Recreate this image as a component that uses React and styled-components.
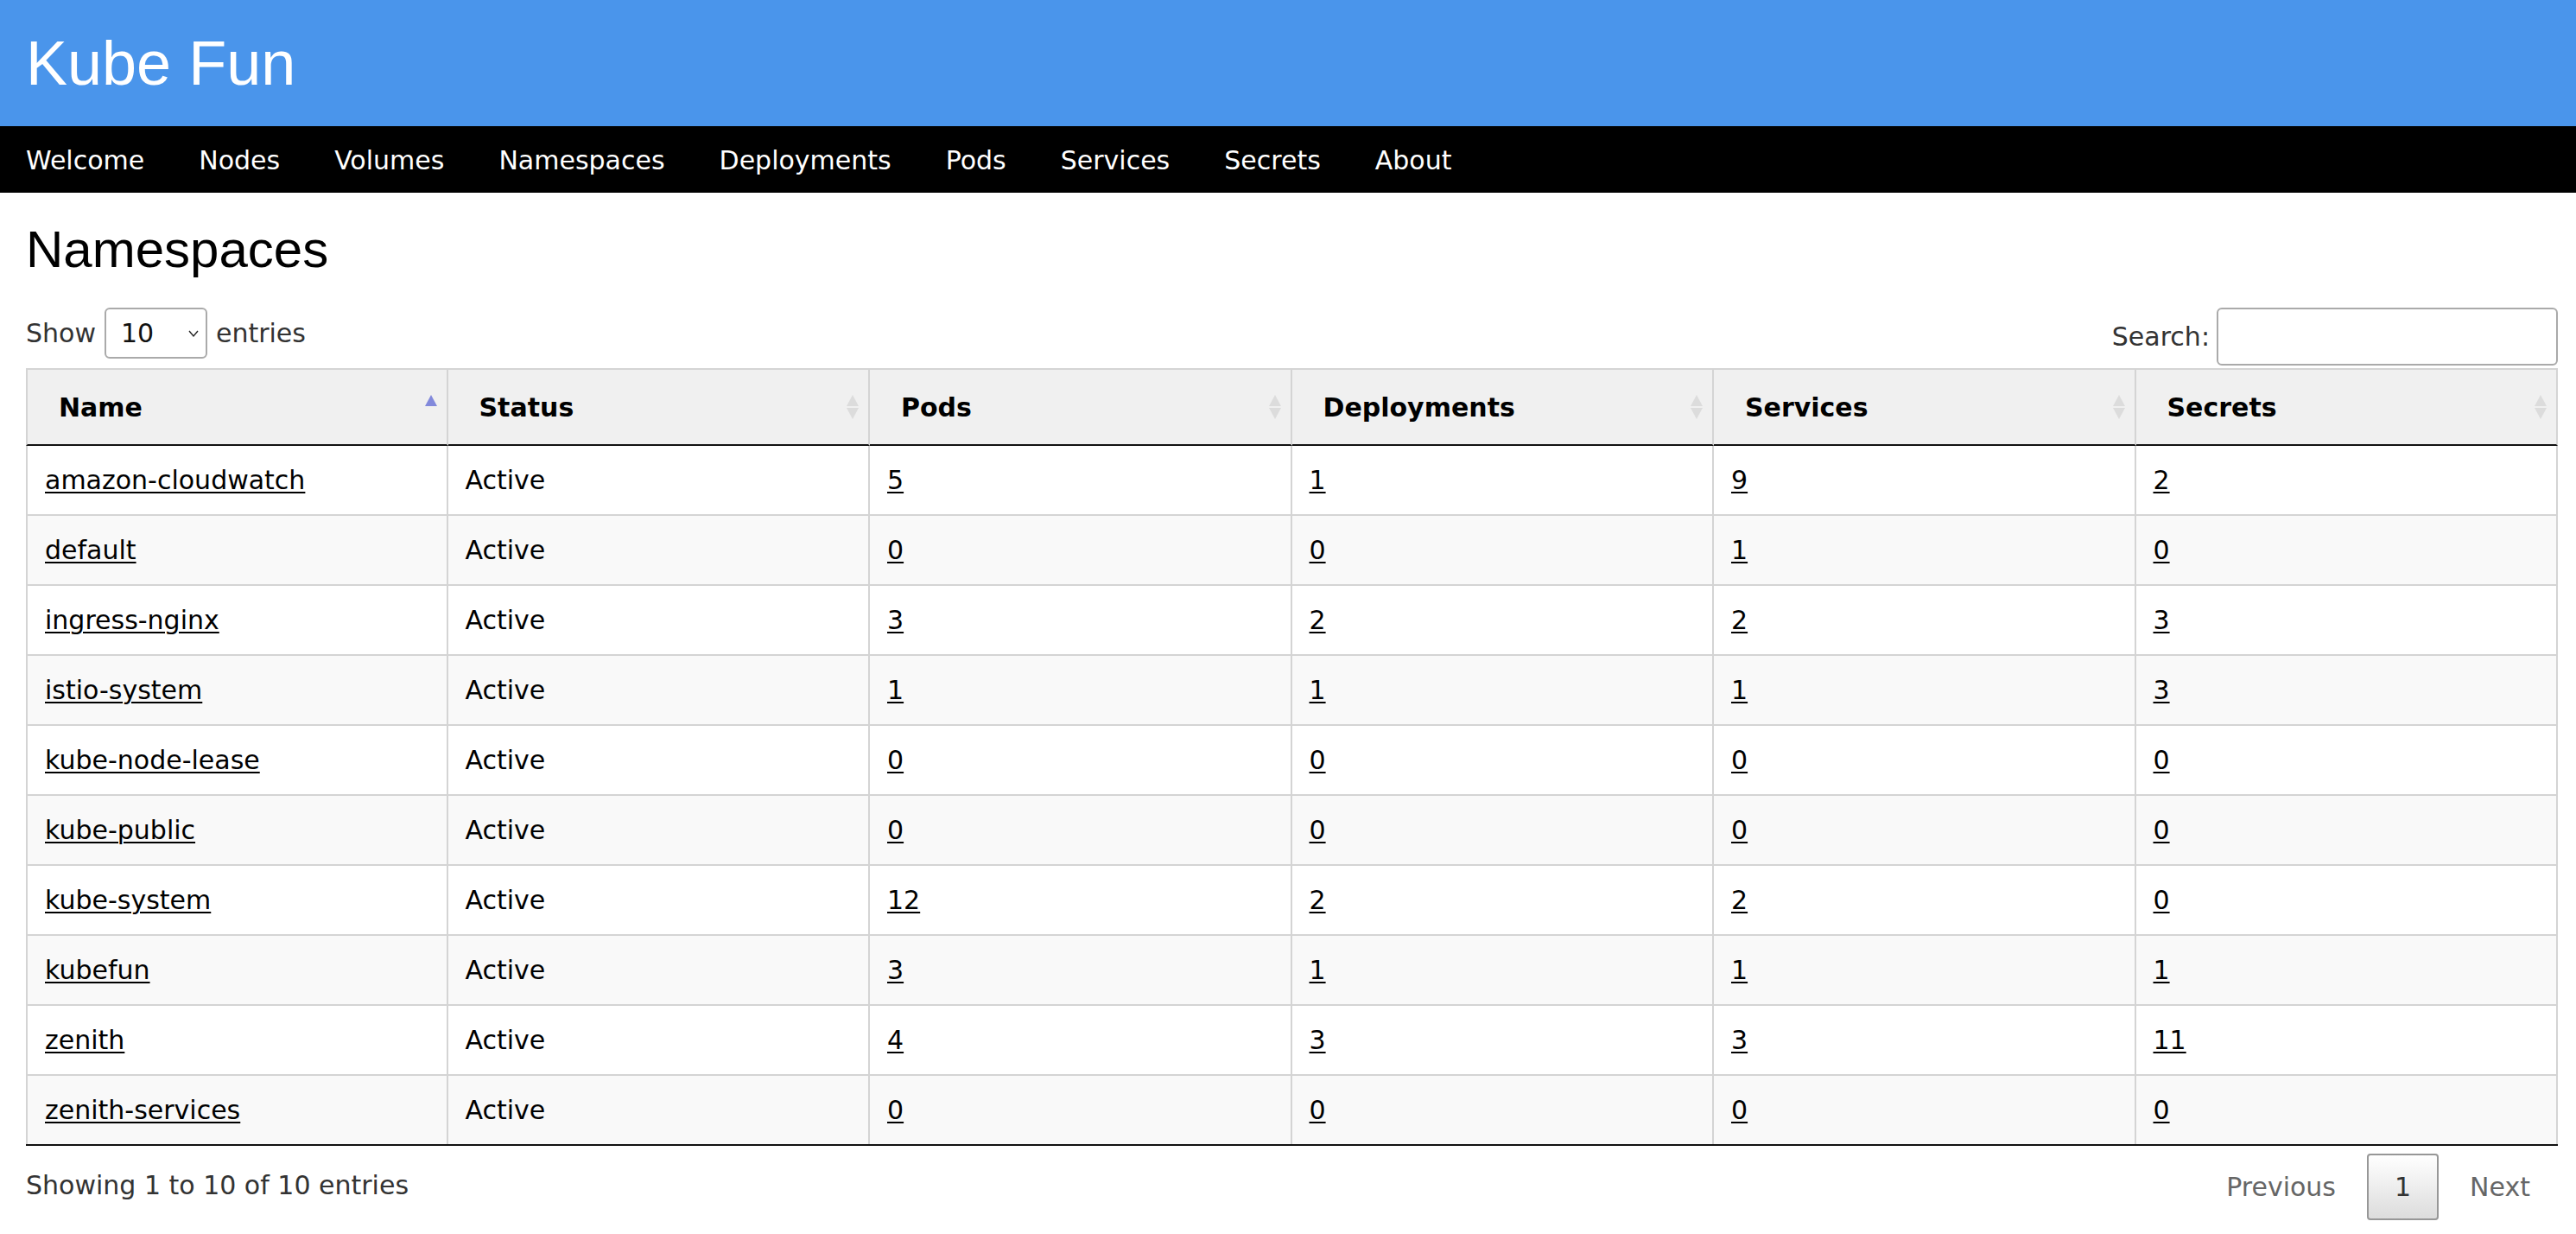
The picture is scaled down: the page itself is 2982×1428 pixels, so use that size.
import React from 'react';
import styled, { createGlobalStyle } from 'styled-components';

const GlobalStyle = createGlobalStyle`
  html, body {
    margin: 0;
    padding: 0;
    background: #fff;
  }
  body {
    font-family: "DejaVu Sans", Verdana, sans-serif;
    color: #333;
  }
`;

const namespaces = [
  { name: 'amazon-cloudwatch', pods: 5, deployments: 1, services: 9, secrets: 2 },
  { name: 'default', pods: 0, deployments: 0, services: 1, secrets: 0 },
  { name: 'ingress-nginx', pods: 3, deployments: 2, services: 2, secrets: 3 },
  { name: 'istio-system', pods: 1, deployments: 1, services: 1, secrets: 3 },
  { name: 'kube-node-lease', pods: 0, deployments: 0, services: 0, secrets: 0 },
  { name: 'kube-public', pods: 0, deployments: 0, services: 0, secrets: 0 },
  { name: 'kube-system', pods: 12, deployments: 2, services: 2, secrets: 0 },
  { name: 'kubefun', pods: 3, deployments: 1, services: 1, secrets: 1 },
  { name: 'zenith', pods: 4, deployments: 3, services: 3, secrets: 11 },
  { name: 'zenith-services', pods: 0, deployments: 0, services: 0, secrets: 0 },
];

const menu = ['Welcome', 'Nodes', 'Volumes', 'Namespaces', 'Deployments', 'Pods', 'Services', 'Secrets', 'About'];

const columns = [
  { label: 'Name', sort: 'asc' },
  { label: 'Status', sort: 'both' },
  { label: 'Pods', sort: 'both' },
  { label: 'Deployments', sort: 'both' },
  { label: 'Services', sort: 'both' },
  { label: 'Secrets', sort: 'both' },
];

const SCHeader = styled.header`
  height: 146px;
  background: #4a95eb;
  display: flex;
  align-items: center;
  padding: 0 30px;
`;
const SCTitle = styled.h1`
  margin: 0;
  font-family: "Liberation Sans", Arial, sans-serif;
  font-weight: normal;
  font-size: 72px;
  color: #fff;
`;
const SCNav = styled.nav`
  height: 77px;
  background: #000;
  display: flex;
  align-items: center;
  padding: 2px 0 0 30px;
  box-sizing: border-box;
  gap: 63px;
`;
const SCNavLink = styled.a`
  color: #fff;
  font-size: 30px;
  text-decoration: none;
  cursor: pointer;
`;
const SCMain = styled.main`
  padding: 0 21px 0 30px;
`;
const SCPageTitle = styled.h2`
  margin: 31px 0 0;
  font-family: "Liberation Sans", Arial, sans-serif;
  font-weight: normal;
  font-size: 60px;
  line-height: 70px;
  color: #000;
`;
const SCControls = styled.div`
  margin-top: 32px;
  margin-bottom: 3px;
  display: flex;
  justify-content: space-between;
  align-items: flex-start;
  font-size: 30px;
  color: #333;
`;
const SCLength = styled.label`
  display: flex;
  align-items: center;
  gap: 10px;
  height: 59px;
`;
const SCSelectWrap = styled.span`
  position: relative;
  display: inline-flex;
`;
const SCSelect = styled.select`
  appearance: none;
  width: 119px;
  height: 59px;
  border: 2px solid #aaa;
  border-radius: 6px;
  background: #fff;
  padding: 0 0 0 17px;
  font-family: inherit;
  font-size: 30px;
  color: #111;
`;
const SCChevron = styled.svg`
  position: absolute;
  right: 9px;
  top: 25px;
  pointer-events: none;
`;
const SCSearch = styled.label`
  display: flex;
  align-items: center;
  gap: 8px;
  height: 67px;
`;
const SCInput = styled.input`
  width: 395px;
  height: 67px;
  box-sizing: border-box;
  border: 2px solid #aaa;
  border-radius: 6px;
  background: #fff;
  font-family: inherit;
  font-size: 30px;
  padding: 0 10px;
`;
const SCTable = styled.table`
  width: 100%;
  table-layout: fixed;
  border-collapse: separate;
  border-spacing: 0;
  border-bottom: 2px solid #111;
  font-size: 30px;
  color: #000;
`;
const SCTh = styled.th`
  position: relative;
  background: #f0f0f0;
  text-align: left;
  font-weight: bold;
  line-height: 46px;
  padding: 21px 36px 19px;
  border-top: 2px solid #d4d4d4;
  border-right: 2px solid #d4d4d4;
  border-bottom: 2px solid #111;
  border-left: ${({ $first }) => ($first ? '2px solid #d4d4d4' : 'none')};
`;
const SCSortIcon = styled.svg`
  position: absolute;
  right: 10px;
  top: 50%;
  transform: translateY(-50%);
`;
const SCRow = styled.tr`
  background: ${({ $striped }) => ($striped ? '#f9f9f9' : '#fff')};
`;
const SCTd = styled.td`
  line-height: 47px;
  padding: 16px 20px;
  border-top: ${({ $firstRow }) => ($firstRow ? 'none' : '2px solid #d4d4d4')};
  border-right: 2px solid #d4d4d4;
  border-left: ${({ $first }) => ($first ? '2px solid #d4d4d4' : 'none')};
  white-space: nowrap;
`;
const SCCellLink = styled.a`
  color: #000;
  text-decoration: underline;
  text-underline-offset: 3px;
  text-decoration-thickness: 2px;
  cursor: pointer;
`;
const SCFooter = styled.div`
  display: flex;
  justify-content: space-between;
  align-items: flex-start;
  font-size: 30px;
  color: #333;
`;
const SCInfo = styled.div`
  padding-top: 24px;
  line-height: 44px;
`;
const SCPaginate = styled.div`
  padding-top: 9px;
  display: flex;
  gap: 4px;
`;
const SCPageButton = styled.a`
  box-sizing: border-box;
  height: 77px;
  display: flex;
  align-items: center;
  padding: 0 30px;
  border: 2px solid ${({ $current }) => ($current ? '#979797' : 'transparent')};
  border-radius: 4px;
  color: ${({ $current }) => ($current ? '#333' : '#666')};
  background: ${({ $current }) => ($current ? 'linear-gradient(to bottom, #fff 0%, #dcdcdc 100%)' : 'transparent')};
  cursor: default;
`;

const SortIcon = ({ type }) => (
  <SCSortIcon width="16" height="30" viewBox="0 0 16 30">
    <polygon points="8,1 15,14 1,14" fill={type === 'asc' ? '#8289db' : '#dcdcdc'} />
    {type === 'both' && <polygon points="1,16 15,16 8,29" fill="#dcdcdc" />}
  </SCSortIcon>
);

const App = () => {
  return (
    <>
      <GlobalStyle />
      <SCHeader>
        <SCTitle>Kube Fun</SCTitle>
      </SCHeader>
      <SCNav>
        {menu.map((item) => (
          <SCNavLink key={item}>{item}</SCNavLink>
        ))}
      </SCNav>
      <SCMain>
        <SCPageTitle>Namespaces</SCPageTitle>
        <SCControls>
          <SCLength>
            Show
            <SCSelectWrap>
              <SCSelect defaultValue="10">
                <option value="10">10</option>
                <option value="25">25</option>
                <option value="50">50</option>
                <option value="100">100</option>
              </SCSelect>
              <SCChevron width="14" height="10" viewBox="0 0 14 10">
                <polyline points="2,2 7,8 12,2" fill="none" stroke="#222" strokeWidth="1.4" />
              </SCChevron>
            </SCSelectWrap>
            entries
          </SCLength>
          <SCSearch>
            Search:
            <SCInput type="search" />
          </SCSearch>
        </SCControls>
        <SCTable>
          <thead>
            <tr>
              {columns.map((col, i) => (
                <SCTh key={col.label} $first={i === 0}>
                  {col.label}
                  <SortIcon type={col.sort} />
                </SCTh>
              ))}
            </tr>
          </thead>
          <tbody>
            {namespaces.map((ns, i) => (
              <SCRow key={ns.name} $striped={i % 2 === 1}>
                <SCTd $first $firstRow={i === 0}>
                  <SCCellLink>{ns.name}</SCCellLink>
                </SCTd>
                <SCTd $firstRow={i === 0}>Active</SCTd>
                <SCTd $firstRow={i === 0}>
                  <SCCellLink>{ns.pods}</SCCellLink>
                </SCTd>
                <SCTd $firstRow={i === 0}>
                  <SCCellLink>{ns.deployments}</SCCellLink>
                </SCTd>
                <SCTd $firstRow={i === 0}>
                  <SCCellLink>{ns.services}</SCCellLink>
                </SCTd>
                <SCTd $firstRow={i === 0}>
                  <SCCellLink>{ns.secrets}</SCCellLink>
                </SCTd>
              </SCRow>
            ))}
          </tbody>
        </SCTable>
        <SCFooter>
          <SCInfo>Showing 1 to 10 of 10 entries</SCInfo>
          <SCPaginate>
            <SCPageButton>Previous</SCPageButton>
            <SCPageButton $current>1</SCPageButton>
            <SCPageButton>Next</SCPageButton>
          </SCPaginate>
        </SCFooter>
      </SCMain>
    </>
  );
};

export default App;
